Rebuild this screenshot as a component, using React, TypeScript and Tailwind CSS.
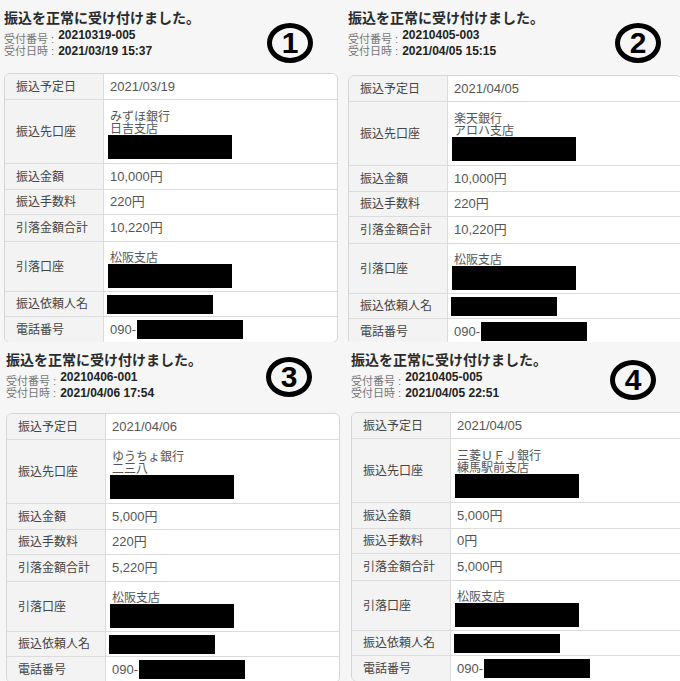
import React from "react";

type P = {
  n: string;
  no: string;
  dt: string;
  date: string;
  bank: string;
  branch: string;
  amt: string;
  fee: string;
  total: string;
  pad: string;
  head: string;
  circ: string;
};

const panels: P[] = [
  {
    n: "1",
    no: "20210319-005",
    dt: "2021/03/19 15:37",
    date: "2021/03/19",
    bank: "みずほ銀行",
    branch: "日吉支店",
    amt: "10,000円",
    fee: "220円",
    total: "10,220円",
    pad: "pl-[4px]",
    head: "h-[73px]",
    circ: "mt-[23px] mr-[27px]",
  },
  {
    n: "2",
    no: "20210405-003",
    dt: "2021/04/05 15:15",
    date: "2021/04/05",
    bank: "楽天銀行",
    branch: "アロハ支店",
    amt: "10,000円",
    fee: "220円",
    total: "10,220円",
    pad: "pl-[8px]",
    head: "h-[75px]",
    circ: "mt-[23px] mr-[19px]",
  },
  {
    n: "3",
    no: "20210406-001",
    dt: "2021/04/06 17:54",
    date: "2021/04/06",
    bank: "ゆうちょ銀行",
    branch: "二三八",
    amt: "5,000円",
    fee: "220円",
    total: "5,220円",
    pad: "pl-[6px]",
    head: "h-[71px]",
    circ: "mt-[15px] mr-[28px]",
  },
  {
    n: "4",
    no: "20210405-005",
    dt: "2021/04/05 22:51",
    date: "2021/04/05",
    bank: "三菱ＵＦＪ銀行",
    branch: "練馬駅前支店",
    amt: "5,000円",
    fee: "0円",
    total: "5,000円",
    pad: "pl-[11px]",
    head: "h-[70px]",
    circ: "mt-[18px] mr-[24px]",
  },
];

function Row({
  label,
  h,
  last,
  children,
}: {
  label: string;
  h: string;
  last?: boolean;
  children: React.ReactNode;
}) {
  return (
    <div className={`flex ${h} ${last ? "" : "border-b border-[#dcdcdc]"}`}>
      <div className="w-[99px] shrink-0 bg-[#f3f3f3] border-r border-[#dcdcdc] flex items-center pl-[11px] text-[12px] text-[#444]">
        {label}
      </div>
      <div className="flex-1 bg-white pl-[6px] text-[13px] text-[#555]">{children}</div>
    </div>
  );
}

function Panel({ p }: { p: P }) {
  return (
    <div className={`overflow-hidden ${p.pad} bg-[#f6f6f6]`}>
      <div className={`flex ${p.head}`}>
        <div className="flex flex-col pt-[9px]">
          <div className="text-[14px] leading-[18px] font-bold text-[#2a2a2a] whitespace-nowrap">
            振込を正常に受け付けました。
          </div>
          <div className="flex items-start h-[16px] mt-[2px]">
            <span className="mt-[5px] text-[11px] leading-[11px] text-[#777] whitespace-nowrap">受付番号 :</span>
            <span className="ml-[4px] text-[12px] leading-[12px] font-bold text-[#222]">{p.no}</span>
          </div>
          <div className="flex items-baseline">
            <span className="text-[11px] leading-[12px] text-[#777] whitespace-nowrap">受付日時 :</span>
            <span className="ml-[4px] text-[12px] leading-[12px] font-bold text-[#222] whitespace-nowrap">{p.dt}</span>
          </div>
        </div>
        <div
          className={`ml-auto ${p.circ} w-[46px] h-[40px] shrink-0 rounded-[50%] border-[5px] border-black flex items-center justify-center text-[30px] leading-none font-bold text-black`}
        >
          {p.n}
        </div>
      </div>
      <div className="w-[334px] border border-[#d6d6d6] rounded-[6px] overflow-hidden">
        <Row label="振込予定日" h="h-[26px]">
          <div className="h-full flex items-center">{p.date}</div>
        </Row>
        <Row label="振込先口座" h="h-[64px]">
          <div className="flex flex-col pt-[11px]">
            <div className="text-[12px] leading-[12px] whitespace-pre-line">{p.bank + "\n" + p.branch}</div>
            <div className="w-[124px] h-[24px] bg-black ml-[-2px]" />
          </div>
        </Row>
        <Row label="振込金額" h="h-[26px]">
          <div className="h-full flex items-center">{p.amt}</div>
        </Row>
        <Row label="振込手数料" h="h-[25px]">
          <div className="h-full flex items-center">{p.fee}</div>
        </Row>
        <Row label="引落金額合計" h="h-[27px]">
          <div className="h-full flex items-center">{p.total}</div>
        </Row>
        <Row label="引落口座" h="h-[50px]">
          <div className="flex flex-col pt-[10px]">
            <div className="text-[12px] leading-[12px]">松阪支店</div>
            <div className="w-[124px] h-[24px] bg-black ml-[-2px]" />
          </div>
        </Row>
        <Row label="振込依頼人名" h="h-[25px]">
          <div className="h-full flex items-center">
            <div className="w-[106px] h-[19px] bg-black ml-[-3px]" />
          </div>
        </Row>
        <Row label="電話番号" h="h-[25px]" last>
          <div className="h-full flex items-center">
            <span>090-</span>
            <div className="w-[106px] h-[19px] bg-black ml-[1px]" />
          </div>
        </Row>
      </div>
    </div>
  );
}

export default function App() {
  return (
    <div className="w-[680px] h-[681px] overflow-hidden grid grid-cols-[340px_340px] grid-rows-[342px_339px] bg-[#f6f6f6] font-['Liberation_Sans','Noto_Sans_CJK_JP',sans-serif]">
      {panels.map((p) => (
        <Panel key={p.n} p={p} />
      ))}
    </div>
  );
}
